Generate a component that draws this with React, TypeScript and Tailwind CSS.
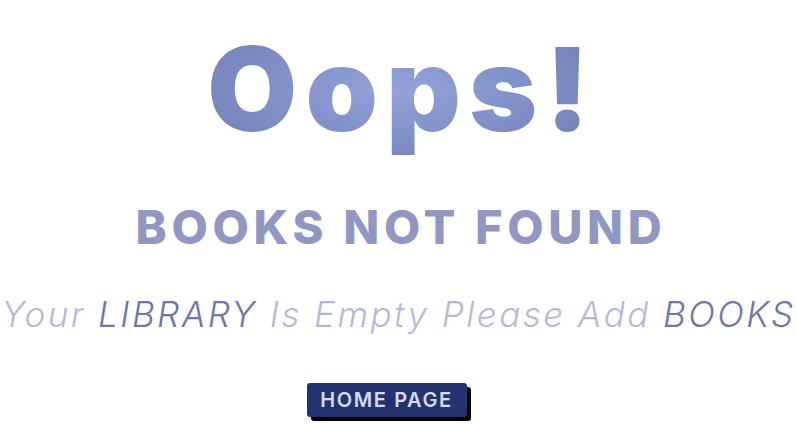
import React from 'react'

export default function App() {
    return (
        <div className="w-[797px] h-[425px] bg-white overflow-hidden flex flex-col items-center font-['Inter',sans-serif]">
            {/* big headline */}
            <h1 className="mt-[14px] text-[116px] leading-[150px] font-black tracking-[0.07em] pl-[8px]
                bg-[radial-gradient(ellipse_at_center,#93a3da_0%,#8090c8_45%,#6c7cae_100%)]
                bg-clip-text text-transparent">
                Oops!
            </h1>

            <h2 className="mt-[35px] text-[47px] leading-[56px] font-extrabold tracking-[0.1em] pl-[5px] text-[#8f97c2]">
                BOOKS NOT FOUND
            </h2>

            <p className="mt-[37px] whitespace-nowrap text-[35px] leading-[44px] italic font-light tracking-[0.07em] text-[#b4b9db]">
                Your <span className="text-[#6b76b3]">LIBRARY</span> Is Empty Please Add <span className="text-[#6b76b3]">BOOKS</span>
            </p>

            <button className="mt-[47px] mr-[24px] w-[160px] h-[34px] rounded-[3px] bg-[#233370]
                text-[#d3dbef] text-[20px] font-semibold tracking-[0.08em]
                shadow-[4px_4px_0_#000]">
                HOME PAGE
            </button>
        </div>
    )
}
